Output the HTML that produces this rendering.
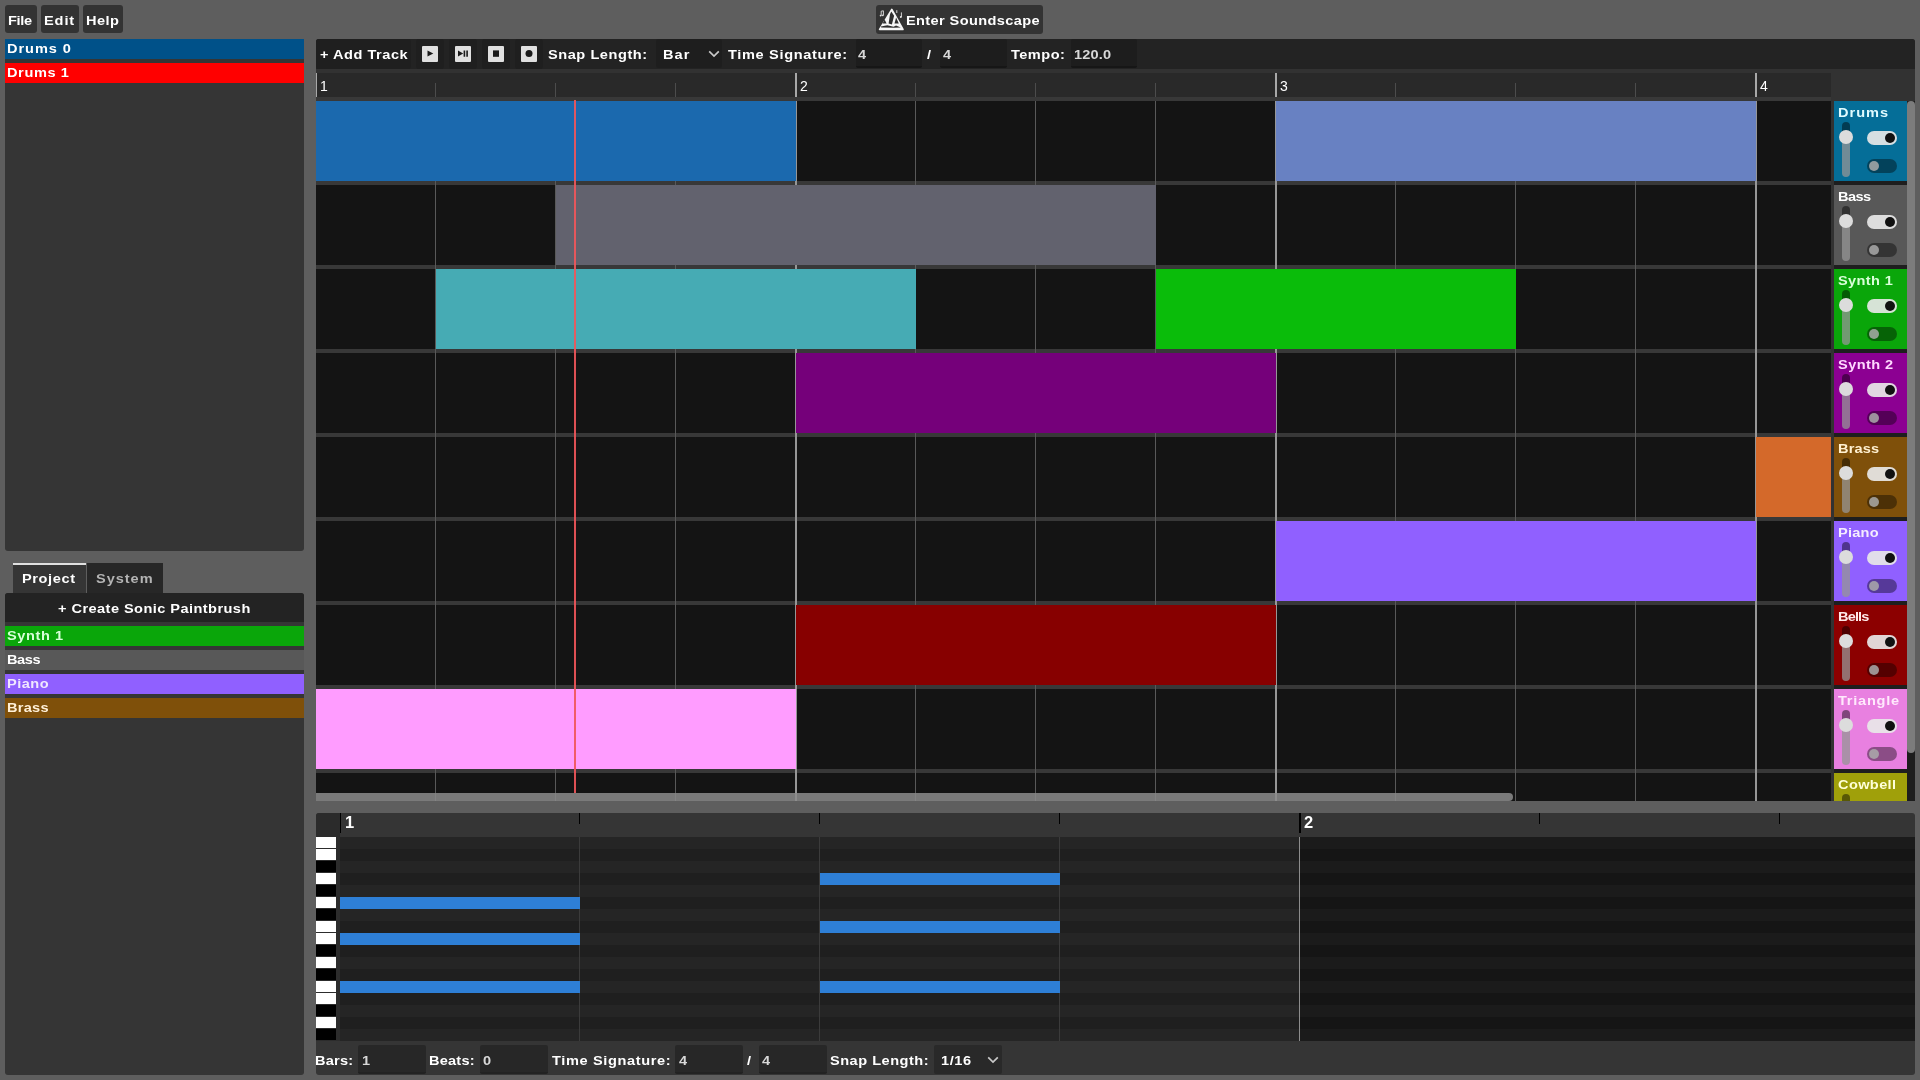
<!DOCTYPE html>
<html><head><meta charset="utf-8"><title>DAW</title><style>
html,body{margin:0;padding:0;}
body{width:1920px;height:1080px;background:#5e5e5e;position:relative;overflow:hidden;font-family:'Liberation Sans', sans-serif;}
body>div,body>svg,body>span,.h>i{position:absolute;display:block;}
.t{will-change:transform;transform-origin:0 0;white-space:pre;color:#fff;font-weight:bold;font-size:13px;line-height:20px;height:20px;}
.h{left:1834px;width:73px;overflow:hidden;}
.h>i{font-style:normal;}
.s1{left:8px;top:21px;width:8px;height:20px;border-radius:4px;background:rgba(0,0,0,.45);}
.s2{left:8px;top:36px;width:8px;height:40px;border-radius:4px;background:rgba(150,150,150,.75);}
.k{left:5px;top:29px;width:14px;height:14px;border-radius:7px;background:#dcdcdc;}
.on{left:33px;top:30px;width:30px;height:14px;border-radius:7px;background:rgba(232,232,232,.92);}
.onk{left:51px;top:32px;width:10px;height:10px;border-radius:5px;background:#111;}
.off{left:33px;top:58px;width:30px;height:14px;border-radius:7px;background:rgba(0,0,0,.4);}
.offk{left:35px;top:60px;width:10px;height:10px;border-radius:5px;background:rgba(170,170,170,.85);}
</style></head><body>
<div style="left:5px;top:5px;width:32px;height:28px;background:#333333;border-radius:3px;"></div>
<div style="left:41px;top:5px;width:38px;height:28px;background:#333333;border-radius:3px;"></div>
<div style="left:83px;top:5px;width:40px;height:28px;background:#333333;border-radius:3px;"></div>
<div style="left:876px;top:5px;width:167px;height:29px;background:#333333;border-radius:3px;"></div>
<svg style="left:874px;top:4px" width="36" height="30" viewBox="0 0 36 30"><path d="M17.8 5.4 L29.0 25.5 L5.6 25.5 Z" fill="#f6f6f6" stroke="#f6f6f6" stroke-width="1.6" stroke-linejoin="round"/><path d="M10.6 15.6 L8.6 19.5 L12.6 19.5 Z M17.3 7.4 L20.1 11.8 L17.9 20.6 L14.6 19.5 L16 10.2 Z M22.1 13.4 L20.5 19.4 L24.8 19.4 Z M6.9 22.4 L13.3 21.3 L19.6 22.7 L22 21.6 L26.8 23.4 L20 23.8 L7.2 23.6 Z" fill="#2e2e2e"/><path d="M7.2 7.2v4.6M9.4 6.8v4.6M7.2 7.2l2.2-.4M22.8 6.2v2.8M27.4 8.4v4.6" stroke="#e4e4e4" stroke-width=".9" fill="none"/><circle cx="6.6" cy="11.6" r=".9" fill="#e4e4e4"/><circle cx="8.8" cy="11.4" r=".8" fill="#e4e4e4"/><circle cx="26.8" cy="13" r="1" fill="#e4e4e4"/></svg>
<div style="left:5px;top:39px;width:299px;height:512px;background:#353535;border-radius:3px;"></div>
<div style="left:5px;top:39px;width:299px;height:20px;background:#005189;"></div>
<div style="left:5px;top:63px;width:299px;height:20px;background:#ff0000;"></div>
<div style="left:13px;top:563px;width:73px;height:30px;background:#353535;border-top:2px solid #e0e0e0;box-sizing:border-box;"></div>
<div style="left:87px;top:563px;width:76px;height:30px;background:#272727;"></div>
<div style="left:5px;top:593px;width:299px;height:482px;background:#353535;border-radius:3px;"></div>
<div style="left:5px;top:593px;width:299px;height:29px;background:#232323;border-radius:3px 3px 0 0;"></div>
<div style="left:5px;top:626px;width:299px;height:20px;background:#0aa60a;"></div>
<div style="left:5px;top:650px;width:299px;height:20px;background:#585858;"></div>
<div style="left:5px;top:674px;width:299px;height:20px;background:#9060ff;"></div>
<div style="left:5px;top:698px;width:299px;height:20px;background:#7f500a;"></div>
<div style="left:316px;top:39px;width:1599px;height:762px;background:#323232;border-radius:3px;"></div>
<div style="left:316px;top:39px;width:1599px;height:29.5px;background:#232323;border-radius:3px 3px 0 0;"></div>
<div style="left:316px;top:39px;width:95px;height:29.5px;background:#1f1f1f;border-radius:3px;"></div>
<div style="left:416px;top:39px;width:28px;height:29.5px;background:#1f1f1f;border-radius:3px;"></div>
<div style="left:449px;top:39px;width:28px;height:29.5px;background:#1f1f1f;border-radius:3px;"></div>
<div style="left:482px;top:39px;width:28px;height:29.5px;background:#1f1f1f;border-radius:3px;"></div>
<div style="left:515px;top:39px;width:28px;height:29.5px;background:#1f1f1f;border-radius:3px;"></div>
<div style="left:856px;top:39px;width:66px;height:29px;background:#1d1d1d;border-bottom:2px solid #161616;box-sizing:border-box;border-radius:2px;"></div>
<div style="left:940px;top:39px;width:67px;height:29px;background:#1d1d1d;border-bottom:2px solid #161616;box-sizing:border-box;border-radius:2px;"></div>
<div style="left:1071px;top:39px;width:66px;height:29px;background:#1d1d1d;border-bottom:2px solid #161616;box-sizing:border-box;border-radius:2px;"></div>
<div style="left:656px;top:39px;width:66px;height:29px;background:#1e1e1e;border-radius:3px;"></div>
<div style="left:422px;top:46px;width:16px;height:16px;background:#e0e0e0;border-radius:1px;"></div>
<div style="left:455px;top:46px;width:16px;height:16px;background:#e0e0e0;border-radius:1px;"></div>
<div style="left:488px;top:46px;width:16px;height:16px;background:#e0e0e0;border-radius:1px;"></div>
<div style="left:521px;top:46px;width:16px;height:16px;background:#e0e0e0;border-radius:1px;"></div>
<svg style="left:422px;top:46px" width="16" height="16"><path d="M5.5 4.6 L11.3 7.6 L5.5 10.6 Z" fill="#1a1a1a"/></svg>
<svg style="left:455px;top:46px" width="16" height="16"><path d="M3 4.4 L8.2 7.5 L3 10.6 Z M8.6 4.4h1.6v6.3h-1.6z M11.3 4.4h1.6v6.3h-1.6z" fill="#1a1a1a"/></svg>
<svg style="left:488px;top:46px" width="16" height="16"><rect x="5" y="4.4" width="6" height="6.4" fill="#1a1a1a"/></svg>
<svg style="left:521px;top:46px" width="16" height="16"><circle cx="8" cy="7.6" r="3.5" fill="#1a1a1a"/></svg>
<svg style="left:708px;top:50px" width="12" height="8"><path d="M1.2 1.4 L6 6 L10.8 1.4" fill="none" stroke="#c8c8c8" stroke-width="1.7"/></svg>
<div style="left:316px;top:73px;width:1515px;height:24px;background:#292929;"></div>
<div style="left:316px;top:101px;width:1515px;height:80px;background:#141414;"></div>
<div style="left:316px;top:185px;width:1515px;height:80px;background:#141414;"></div>
<div style="left:316px;top:269px;width:1515px;height:80px;background:#141414;"></div>
<div style="left:316px;top:353px;width:1515px;height:80px;background:#141414;"></div>
<div style="left:316px;top:437px;width:1515px;height:80px;background:#141414;"></div>
<div style="left:316px;top:521px;width:1515px;height:80px;background:#141414;"></div>
<div style="left:316px;top:605px;width:1515px;height:80px;background:#141414;"></div>
<div style="left:316px;top:689px;width:1515px;height:80px;background:#141414;"></div>
<div style="left:316px;top:773px;width:1515px;height:28px;background:#141414;"></div>
<div style="left:316px;top:97px;width:1515px;height:4px;background:#383838;"></div>
<div style="left:316px;top:181px;width:1515px;height:4px;background:#383838;"></div>
<div style="left:316px;top:265px;width:1515px;height:4px;background:#383838;"></div>
<div style="left:316px;top:349px;width:1515px;height:4px;background:#383838;"></div>
<div style="left:316px;top:433px;width:1515px;height:4px;background:#383838;"></div>
<div style="left:316px;top:517px;width:1515px;height:4px;background:#383838;"></div>
<div style="left:316px;top:601px;width:1515px;height:4px;background:#383838;"></div>
<div style="left:316px;top:685px;width:1515px;height:4px;background:#383838;"></div>
<div style="left:316px;top:769px;width:1515px;height:4px;background:#383838;"></div>
<div style="left:435px;top:101px;width:1px;height:700px;background:#595959;"></div>
<div style="left:435px;top:83px;width:1px;height:14px;background:#4c4c4c;"></div>
<div style="left:555px;top:101px;width:1px;height:700px;background:#595959;"></div>
<div style="left:555px;top:83px;width:1px;height:14px;background:#4c4c4c;"></div>
<div style="left:675px;top:101px;width:1px;height:700px;background:#595959;"></div>
<div style="left:675px;top:83px;width:1px;height:14px;background:#4c4c4c;"></div>
<div style="left:795px;top:101px;width:2px;height:700px;background:#969696;"></div>
<div style="left:795px;top:73px;width:2px;height:24px;background:#a8a8a8;"></div>
<div style="left:915px;top:101px;width:1px;height:700px;background:#595959;"></div>
<div style="left:915px;top:83px;width:1px;height:14px;background:#4c4c4c;"></div>
<div style="left:1035px;top:101px;width:1px;height:700px;background:#595959;"></div>
<div style="left:1035px;top:83px;width:1px;height:14px;background:#4c4c4c;"></div>
<div style="left:1155px;top:101px;width:1px;height:700px;background:#595959;"></div>
<div style="left:1155px;top:83px;width:1px;height:14px;background:#4c4c4c;"></div>
<div style="left:1275px;top:101px;width:2px;height:700px;background:#969696;"></div>
<div style="left:1275px;top:73px;width:2px;height:24px;background:#a8a8a8;"></div>
<div style="left:1395px;top:101px;width:1px;height:700px;background:#595959;"></div>
<div style="left:1395px;top:83px;width:1px;height:14px;background:#4c4c4c;"></div>
<div style="left:1515px;top:101px;width:1px;height:700px;background:#595959;"></div>
<div style="left:1515px;top:83px;width:1px;height:14px;background:#4c4c4c;"></div>
<div style="left:1635px;top:101px;width:1px;height:700px;background:#595959;"></div>
<div style="left:1635px;top:83px;width:1px;height:14px;background:#4c4c4c;"></div>
<div style="left:1755px;top:101px;width:2px;height:700px;background:#969696;"></div>
<div style="left:1755px;top:73px;width:2px;height:24px;background:#a8a8a8;"></div>
<div style="left:316px;top:73px;width:1px;height:24px;background:#a8a8a8;"></div>
<div style="left:316px;top:101px;width:480px;height:80px;background:#1b69ae;"></div>
<div style="left:1276px;top:101px;width:480px;height:80px;background:#6881c2;"></div>
<div style="left:556px;top:185px;width:600px;height:80px;background:#62626e;"></div>
<div style="left:436px;top:269px;width:480px;height:80px;background:#46abb4;"></div>
<div style="left:1156px;top:269px;width:360px;height:80px;background:#0abc0a;"></div>
<div style="left:796px;top:353px;width:480px;height:80px;background:#75007a;"></div>
<div style="left:1756px;top:437px;width:75px;height:80px;background:#d4692a;"></div>
<div style="left:1276px;top:521px;width:480px;height:80px;background:#9060ff;"></div>
<div style="left:796px;top:605px;width:480px;height:80px;background:#870000;"></div>
<div style="left:316px;top:689px;width:480px;height:80px;background:#ff9cff;"></div>
<span class="t" style="left:320px;top:75.5px;font-weight:normal;font-size:14px;">1</span>
<span class="t" style="left:800px;top:75.5px;font-weight:normal;font-size:14px;">2</span>
<span class="t" style="left:1280px;top:75.5px;font-weight:normal;font-size:14px;">3</span>
<span class="t" style="left:1760px;top:75.5px;font-weight:normal;font-size:14px;">4</span>
<div style="left:574px;top:100px;width:2px;height:693px;background:rgba(240,86,90,0.92);"></div>
<div style="left:316px;top:793px;width:1197px;height:8px;background:rgba(140,140,140,0.85);border-radius:0 4px 4px 0;"></div>
<div style="left:1907px;top:101px;width:8px;height:700px;background:#1d1d1d;"></div>
<div style="left:1907px;top:101px;width:7.5px;height:652px;background:#7c7c7c;border-radius:4px;"></div>
<div style="left:1834px;top:101px;width:73px;height:700px;background:#1e1e1e;"></div>
<div class="h" style="top:101px;height:80px;background:#056e98;"><i class="s1"></i><i class="s2"></i><i class="k"></i><i class="on"></i><i class="onk"></i><i class="off"></i><i class="offk"></i></div>
<div class="h" style="top:185px;height:80px;background:#585858;"><i class="s1"></i><i class="s2"></i><i class="k"></i><i class="on"></i><i class="onk"></i><i class="off"></i><i class="offk"></i></div>
<div class="h" style="top:269px;height:80px;background:#0aa60a;"><i class="s1"></i><i class="s2"></i><i class="k"></i><i class="on"></i><i class="onk"></i><i class="off"></i><i class="offk"></i></div>
<div class="h" style="top:353px;height:80px;background:#8c0092;"><i class="s1"></i><i class="s2"></i><i class="k"></i><i class="on"></i><i class="onk"></i><i class="off"></i><i class="offk"></i></div>
<div class="h" style="top:437px;height:80px;background:#7f500a;"><i class="s1"></i><i class="s2"></i><i class="k"></i><i class="on"></i><i class="onk"></i><i class="off"></i><i class="offk"></i></div>
<div class="h" style="top:521px;height:80px;background:#9060ff;"><i class="s1"></i><i class="s2"></i><i class="k"></i><i class="on"></i><i class="onk"></i><i class="off"></i><i class="offk"></i></div>
<div class="h" style="top:605px;height:80px;background:#8c0000;"><i class="s1"></i><i class="s2"></i><i class="k"></i><i class="on"></i><i class="onk"></i><i class="off"></i><i class="offk"></i></div>
<div class="h" style="top:689px;height:80px;background:#e880e0;"><i class="s1"></i><i class="s2"></i><i class="k"></i><i class="on"></i><i class="onk"></i><i class="off"></i><i class="offk"></i></div>
<div class="h" style="top:773px;height:28px;background:#a0a00a;"><i class="s1"></i><i class="s2"></i><i class="k"></i><i class="on"></i><i class="onk"></i><i class="off"></i><i class="offk"></i></div>
<div style="left:316px;top:813px;width:1599px;height:262px;background:#353535;border-radius:3px;"></div>
<div style="left:316px;top:813px;width:24px;height:24px;background:#2b2b2b;border-radius:3px 0 0 0;"></div>
<div style="left:316px;top:837px;width:24px;height:204px;background:#2c2c2c;"></div>
<div style="left:340px;top:837px;width:960px;height:12px;background:#252525;"></div>
<div style="left:1300px;top:837px;width:615px;height:12px;background:#1b1b1b;"></div>
<div style="left:340px;top:849px;width:960px;height:12px;background:#1f1f1f;"></div>
<div style="left:1300px;top:849px;width:615px;height:12px;background:#151515;"></div>
<div style="left:340px;top:861px;width:960px;height:12px;background:#252525;"></div>
<div style="left:1300px;top:861px;width:615px;height:12px;background:#1b1b1b;"></div>
<div style="left:340px;top:873px;width:960px;height:12px;background:#1f1f1f;"></div>
<div style="left:1300px;top:873px;width:615px;height:12px;background:#151515;"></div>
<div style="left:340px;top:885px;width:960px;height:12px;background:#252525;"></div>
<div style="left:1300px;top:885px;width:615px;height:12px;background:#1b1b1b;"></div>
<div style="left:340px;top:897px;width:960px;height:12px;background:#1f1f1f;"></div>
<div style="left:1300px;top:897px;width:615px;height:12px;background:#151515;"></div>
<div style="left:340px;top:909px;width:960px;height:12px;background:#252525;"></div>
<div style="left:1300px;top:909px;width:615px;height:12px;background:#1b1b1b;"></div>
<div style="left:340px;top:921px;width:960px;height:12px;background:#1f1f1f;"></div>
<div style="left:1300px;top:921px;width:615px;height:12px;background:#151515;"></div>
<div style="left:340px;top:933px;width:960px;height:12px;background:#252525;"></div>
<div style="left:1300px;top:933px;width:615px;height:12px;background:#1b1b1b;"></div>
<div style="left:340px;top:945px;width:960px;height:12px;background:#1f1f1f;"></div>
<div style="left:1300px;top:945px;width:615px;height:12px;background:#151515;"></div>
<div style="left:340px;top:957px;width:960px;height:12px;background:#252525;"></div>
<div style="left:1300px;top:957px;width:615px;height:12px;background:#1b1b1b;"></div>
<div style="left:340px;top:969px;width:960px;height:12px;background:#1f1f1f;"></div>
<div style="left:1300px;top:969px;width:615px;height:12px;background:#151515;"></div>
<div style="left:340px;top:981px;width:960px;height:12px;background:#252525;"></div>
<div style="left:1300px;top:981px;width:615px;height:12px;background:#1b1b1b;"></div>
<div style="left:340px;top:993px;width:960px;height:12px;background:#1f1f1f;"></div>
<div style="left:1300px;top:993px;width:615px;height:12px;background:#151515;"></div>
<div style="left:340px;top:1005px;width:960px;height:12px;background:#252525;"></div>
<div style="left:1300px;top:1005px;width:615px;height:12px;background:#1b1b1b;"></div>
<div style="left:340px;top:1017px;width:960px;height:12px;background:#1f1f1f;"></div>
<div style="left:1300px;top:1017px;width:615px;height:12px;background:#151515;"></div>
<div style="left:340px;top:1029px;width:960px;height:12px;background:#252525;"></div>
<div style="left:1300px;top:1029px;width:615px;height:12px;background:#1b1b1b;"></div>
<div style="left:316px;top:837px;width:20px;height:11px;background:#ffffff;"></div>
<div style="left:316px;top:849px;width:20px;height:11px;background:#ffffff;"></div>
<div style="left:316px;top:861px;width:20px;height:11px;background:#000000;"></div>
<div style="left:316px;top:873px;width:20px;height:11px;background:#ffffff;"></div>
<div style="left:316px;top:885px;width:20px;height:11px;background:#000000;"></div>
<div style="left:316px;top:897px;width:20px;height:11px;background:#ffffff;"></div>
<div style="left:316px;top:909px;width:20px;height:11px;background:#000000;"></div>
<div style="left:316px;top:921px;width:20px;height:11px;background:#ffffff;"></div>
<div style="left:316px;top:933px;width:20px;height:11px;background:#ffffff;"></div>
<div style="left:316px;top:945px;width:20px;height:11px;background:#000000;"></div>
<div style="left:316px;top:957px;width:20px;height:11px;background:#ffffff;"></div>
<div style="left:316px;top:969px;width:20px;height:11px;background:#000000;"></div>
<div style="left:316px;top:981px;width:20px;height:11px;background:#ffffff;"></div>
<div style="left:316px;top:993px;width:20px;height:11px;background:#ffffff;"></div>
<div style="left:316px;top:1005px;width:20px;height:11px;background:#000000;"></div>
<div style="left:316px;top:1017px;width:20px;height:11px;background:#ffffff;"></div>
<div style="left:316px;top:1029px;width:20px;height:11px;background:#000000;"></div>
<div style="left:579px;top:837px;width:1px;height:204px;background:#3b3b3b;"></div>
<div style="left:579px;top:813px;width:1px;height:11px;background:#000;"></div>
<div style="left:819px;top:837px;width:1px;height:204px;background:#3b3b3b;"></div>
<div style="left:819px;top:813px;width:1px;height:11px;background:#000;"></div>
<div style="left:1059px;top:837px;width:1px;height:204px;background:#3b3b3b;"></div>
<div style="left:1059px;top:813px;width:1px;height:11px;background:#000;"></div>
<div style="left:1299px;top:837px;width:1px;height:204px;background:#8c8c8c;"></div>
<div style="left:1299px;top:813px;width:2px;height:20px;background:#000;"></div>
<div style="left:1539px;top:813px;width:1px;height:11px;background:#000;"></div>
<div style="left:1779px;top:813px;width:1px;height:11px;background:#000;"></div>
<div style="left:340px;top:813px;width:1px;height:20px;background:#000;"></div>
<span class="t" style="left:344.5px;top:811.5px;font-size:16.5px;">1</span>
<span class="t" style="left:1303.5px;top:811.5px;font-size:16.5px;">2</span>
<div style="left:340px;top:897px;width:240px;height:12px;background:#2e7fd6;"></div>
<div style="left:340px;top:933px;width:240px;height:12px;background:#2e7fd6;"></div>
<div style="left:340px;top:981px;width:240px;height:12px;background:#2e7fd6;"></div>
<div style="left:820px;top:873px;width:240px;height:12px;background:#2e7fd6;"></div>
<div style="left:820px;top:921px;width:240px;height:12px;background:#2e7fd6;"></div>
<div style="left:820px;top:981px;width:240px;height:12px;background:#2e7fd6;"></div>
<div style="left:358px;top:1045px;width:68px;height:28.5px;background:#272727;border-bottom:2px solid #222;box-sizing:border-box;border-radius:2px;"></div>
<div style="left:480px;top:1045px;width:68px;height:28.5px;background:#272727;border-bottom:2px solid #222;box-sizing:border-box;border-radius:2px;"></div>
<div style="left:675px;top:1045px;width:68px;height:28.5px;background:#272727;border-bottom:2px solid #222;box-sizing:border-box;border-radius:2px;"></div>
<div style="left:759px;top:1045px;width:68px;height:28.5px;background:#272727;border-bottom:2px solid #222;box-sizing:border-box;border-radius:2px;"></div>
<div style="left:934px;top:1045px;width:68px;height:28.5px;background:#292929;border-radius:2px;"></div>
<svg style="left:987px;top:1056px" width="12" height="8"><path d="M1.2 1.4 L6 6 L10.8 1.4" fill="none" stroke="#c8c8c8" stroke-width="1.7"/></svg>
<span class="t" style="left:8.10px;top:11px;letter-spacing:-0.296px;transform:scaleX(1.12);">File</span>
<span class="t" style="left:44.00px;top:11px;letter-spacing:0.801px;transform:scaleX(1.12);">Edit</span>
<span class="t" style="left:86.30px;top:11px;letter-spacing:0.401px;transform:scaleX(1.12);">Help</span>
<span class="t" style="left:906.30px;top:11px;letter-spacing:0.343px;transform:scaleX(1.12);">Enter Soundscape</span>
<span class="t" style="left:319.60px;top:45px;letter-spacing:0.464px;transform:scaleX(1.12);">+ Add Track</span>
<span class="t" style="left:547.60px;top:45px;letter-spacing:0.494px;transform:scaleX(1.12);">Snap Length:</span>
<span class="t" style="left:662.80px;top:45px;letter-spacing:0.942px;transform:scaleX(1.12);">Bar</span>
<span class="t" style="left:728.10px;top:45px;letter-spacing:0.595px;transform:scaleX(1.12);">Time Signature:</span>
<span class="t" style="left:858.30px;top:45px;letter-spacing:0.000px;transform:scaleX(1.12);color:#d8d8d8;">4</span>
<span class="t" style="left:927.10px;top:45px;letter-spacing:0.000px;transform:scaleX(1.12);">/</span>
<span class="t" style="left:943.00px;top:45px;letter-spacing:0.000px;transform:scaleX(1.12);color:#d8d8d8;">4</span>
<span class="t" style="left:1011.00px;top:45px;letter-spacing:0.428px;transform:scaleX(1.12);">Tempo:</span>
<span class="t" style="left:1074.00px;top:45px;letter-spacing:0.167px;transform:scaleX(1.12);color:#d8d8d8;">120.0</span>
<span class="t" style="left:7.30px;top:39px;letter-spacing:0.837px;transform:scaleX(1.12);">Drums 0</span>
<span class="t" style="left:7.30px;top:63px;letter-spacing:0.539px;transform:scaleX(1.12);">Drums 1</span>
<span class="t" style="left:22.10px;top:569px;letter-spacing:0.541px;transform:scaleX(1.12);">Project</span>
<span class="t" style="left:95.60px;top:569px;letter-spacing:0.857px;transform:scaleX(1.12);color:#b4b4b4;">System</span>
<span class="t" style="left:57.60px;top:599px;letter-spacing:0.396px;transform:scaleX(1.12);">+ Create Sonic Paintbrush</span>
<span class="t" style="left:7.30px;top:626px;letter-spacing:0.520px;transform:scaleX(1.12);color:#d8ffd8;">Synth 1</span>
<span class="t" style="left:7.30px;top:650px;letter-spacing:-0.359px;transform:scaleX(1.12);">Bass</span>
<span class="t" style="left:7.30px;top:674px;letter-spacing:0.434px;transform:scaleX(1.12);color:#f0e8ff;">Piano</span>
<span class="t" style="left:7.30px;top:698px;letter-spacing:0.251px;transform:scaleX(1.12);color:#fff0d8;">Brass</span>
<span class="t" style="left:1837.80px;top:103px;letter-spacing:0.886px;transform:scaleX(1.12);color:#e0fbff;">Drums</span>
<span class="t" style="left:1837.80px;top:187px;letter-spacing:-0.508px;transform:scaleX(1.12);color:#ffffff;">Bass</span>
<span class="t" style="left:1837.80px;top:271px;letter-spacing:0.327px;transform:scaleX(1.12);color:#d8ffd8;">Synth 1</span>
<span class="t" style="left:1837.80px;top:355px;letter-spacing:0.371px;transform:scaleX(1.12);color:#ffd8ff;">Synth 2</span>
<span class="t" style="left:1837.80px;top:439px;letter-spacing:0.139px;transform:scaleX(1.12);color:#fff0d0;">Brass</span>
<span class="t" style="left:1837.80px;top:523px;letter-spacing:0.211px;transform:scaleX(1.12);color:#f4ecff;">Piano</span>
<span class="t" style="left:1837.80px;top:607px;letter-spacing:-0.761px;transform:scaleX(1.12);color:#ffe8e8;">Bells</span>
<span class="t" style="left:1837.80px;top:691px;letter-spacing:0.671px;transform:scaleX(1.12);color:#ffe8fc;">Triangle</span>
<span class="t" style="left:1837.80px;top:775px;letter-spacing:0.339px;transform:scaleX(1.12);color:#ffffd8;">Cowbell</span>
<span class="t" style="left:315.30px;top:1051px;letter-spacing:0.192px;transform:scaleX(1.12);">Bars:</span>
<span class="t" style="left:361.80px;top:1051px;letter-spacing:0.000px;transform:scaleX(1.12);color:#d8d8d8;">1</span>
<span class="t" style="left:429.30px;top:1051px;letter-spacing:0.193px;transform:scaleX(1.12);">Beats:</span>
<span class="t" style="left:483.30px;top:1051px;letter-spacing:0.000px;transform:scaleX(1.12);color:#d8d8d8;">0</span>
<span class="t" style="left:552.30px;top:1051px;letter-spacing:0.563px;transform:scaleX(1.12);">Time Signature:</span>
<span class="t" style="left:678.80px;top:1051px;letter-spacing:0.000px;transform:scaleX(1.12);color:#d8d8d8;">4</span>
<span class="t" style="left:746.80px;top:1051px;letter-spacing:0.000px;transform:scaleX(1.12);">/</span>
<span class="t" style="left:762.30px;top:1051px;letter-spacing:0.000px;transform:scaleX(1.12);color:#d8d8d8;">4</span>
<span class="t" style="left:830.30px;top:1051px;letter-spacing:0.454px;transform:scaleX(1.12);">Snap Length:</span>
<span class="t" style="left:941.30px;top:1051px;letter-spacing:0.521px;transform:scaleX(1.12);">1/16</span>
</body></html>
